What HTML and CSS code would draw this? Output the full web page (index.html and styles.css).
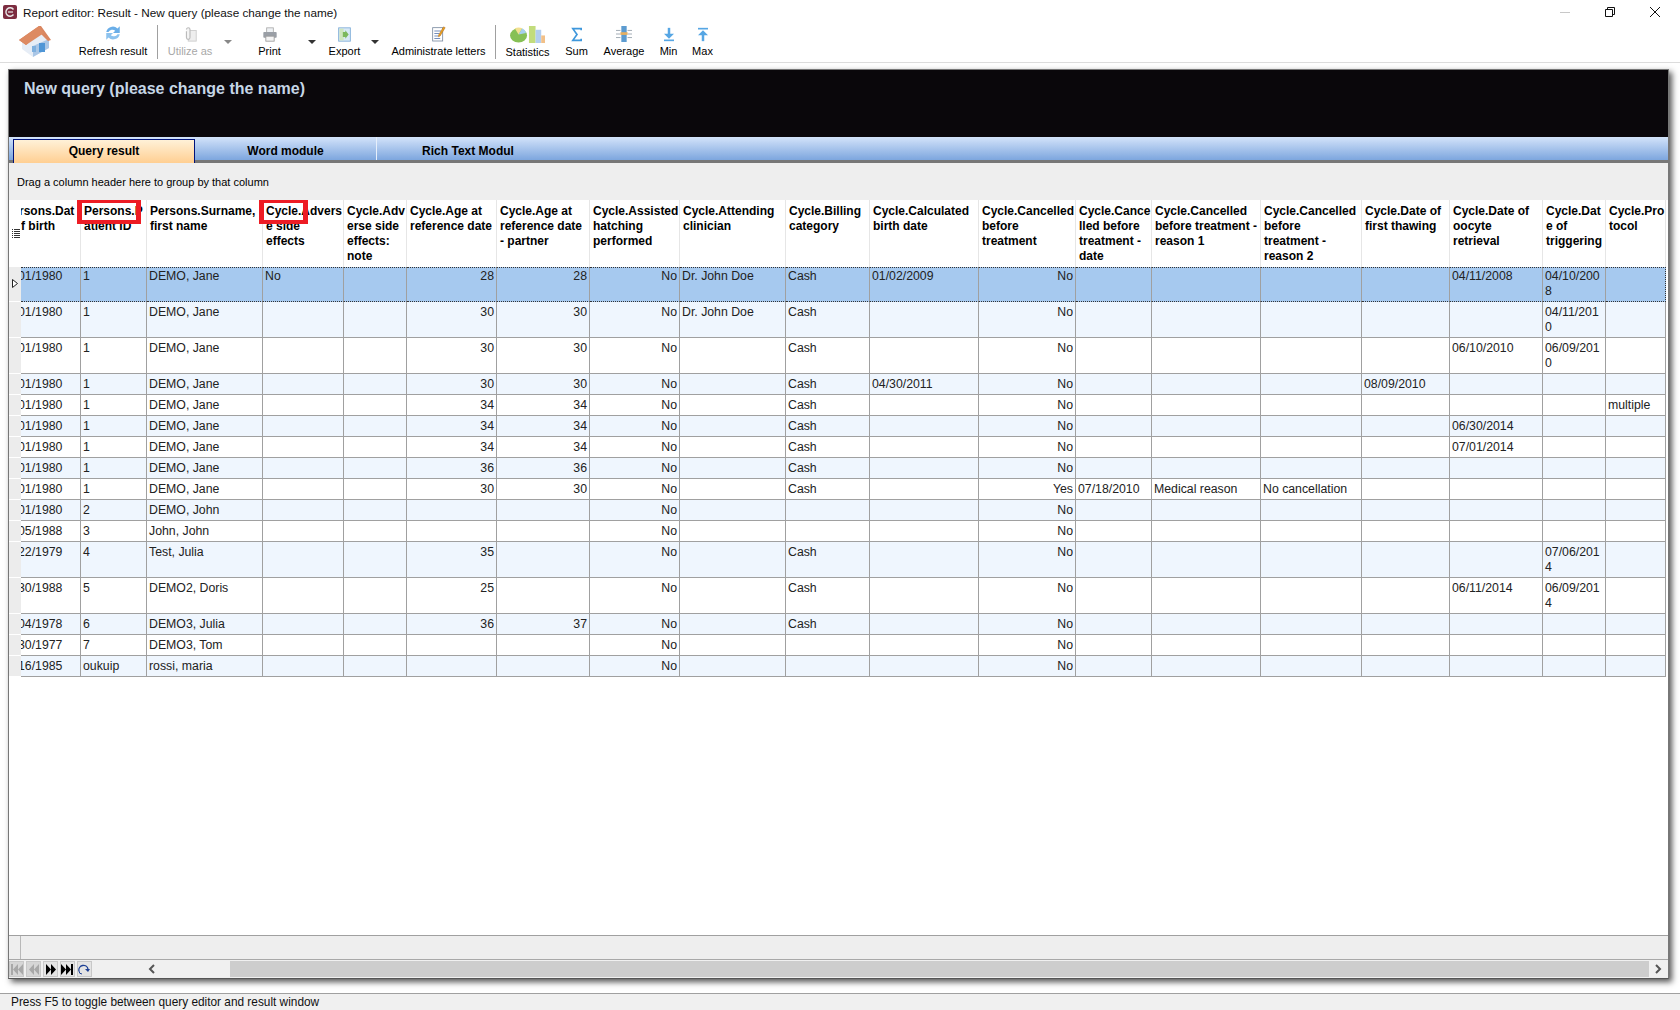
FILE: index.html
```html
<!DOCTYPE html>
<html lang="en">
<head>
    <meta charset="UTF-8">
    <title>Report editor: Result - New query (please change the name)</title>
    <link rel="stylesheet" href="styles.css">
</head>
<body>
    <div class="title-bar">
        <svg class="app-icon" width="16" height="16" viewBox="0 0 16 16"><rect x="1" y="1" width="14" height="14" rx="2" fill="#7c2c40"/><path d="M11.500 5.500a4.200 4.200 0 1 0 0 5" fill="none" stroke="#e8e8e8" stroke-width="1.400"/><path d="M6 8h5" stroke="#e8e8e8" stroke-width="1.200"/></svg>
        <span class="title-text">Report editor: Result - New query (please change the name)</span>
        <div class="win-controls">
            <svg width="10" height="10" viewBox="0 0 10 10"><path d="M0 5.500h10" stroke="#c8c8c8"/></svg>
            <svg width="10" height="10" viewBox="0 0 10 10"><path d="M.5 2.500h7v7h-7zM2.500 2.500v-2h7v7h-2" fill="none" stroke="#111"/></svg>
            <svg width="10" height="10" viewBox="0 0 10 10"><path d="M0 0l10 10M10 0L0 10" stroke="#111"/></svg>
        </div>
    </div>

    <div class="toolbar">
        <svg class="home" width="34" height="33" viewBox="0 0 34 33">
            <path d="M4 15L18 6l13 9v8L15 32 4 24z" fill="#e6edf6"/>
            <path d="M15 21l16-7v9L15 32z" fill="#a9c6e6"/>
            <path d="M1 15L21 1h2l10 14-3 1-9-9-13 13z" fill="#d98660"/>
            <path d="M1 15L21 1l5 7L8 20z" fill="#dd8a62"/>
            <rect x="21" y="18" width="6" height="9" fill="#4f96d6"/>
            <rect x="14" y="21" width="4" height="6" fill="#7fb0de"/>
        </svg>
        <div class="tool tool-refresh">
            <svg width="16" height="18" viewBox="2 1 14 16"><path d="M3 8a6 6 0 0 1 10-3l2-2v6H9l2-2a4 4 0 0 0-6 1z" fill="#6aaee8"/><path d="M15 10a6 6 0 0 1-10 3l-2 2V9h6l-2 2a4 4 0 0 0 6-1z" fill="#8cc2ee"/></svg>
            <span>Refresh result</span>
        </div>
        <div class="tool-sep"></div>
        <div class="tool tool-utilize is-off">
            <svg width="16" height="16" viewBox="0 0 18 18"><rect x="7" y="5" width="9" height="12" fill="#eee" stroke="#ccc"/><path d="M5 4a2 2 0 0 1 4 0v9a2 2 0 0 1-4 0V6" fill="#f4f4f4" stroke="#bbb" stroke-width="1.300"/></svg>
            <span>Utilize as</span>
        </div>
        <div class="caret caret-utilize is-off"></div>
        <div class="tool tool-print">
            <svg width="16" height="15" viewBox="0 0 18 18"><rect x="5" y="1" width="8" height="6" fill="#eef1f4" stroke="#aaa"/><rect x="1" y="6" width="16" height="7" rx="1" fill="#9a9fa6"/><rect x="4" y="11" width="10" height="6" fill="#f4f4f4" stroke="#999"/></svg>
            <span>Print</span>
        </div>
        <div class="caret caret-print"></div>
        <div class="tool tool-export">
            <svg width="15" height="15" viewBox="0 0 18 18"><rect x="2" y="1" width="14" height="16" fill="#d8e8f6" stroke="#7aaad6"/><rect x="3" y="2" width="5" height="14" fill="#cfe6be"/><path d="M7 6h3V4l4 5-4 5v-2H7z" fill="#7cb85c"/></svg>
            <span>Export</span>
        </div>
        <div class="caret caret-export"></div>
        <div class="tool tool-admin">
            <svg width="15" height="17" viewBox="0 0 18 20"><rect x="2" y="3" width="12" height="16" fill="#fff" stroke="#7a8aa0"/><path d="M4 7h8M4 10h6M4 13h5M4 16h7" stroke="#5a7ab0"/><path d="M9 12l6-10 2 1-6 10-2 1z" fill="#e8a020" stroke="#a05a10" stroke-width=".5"/></svg>
            <span>Administrate letters</span>
        </div>
        <div class="tool-sep"></div>
        <div class="tool tool-stats">
            <svg width="36" height="17" viewBox="0 0 38 18"><ellipse cx="9" cy="10" rx="9" ry="7.500" fill="#86c055"/><path d="M9 9L5 2.500a9 7.500 0 0 1 8 0z" fill="#f2e090"/><path d="M9 9l4-6.500a9 7.500 0 0 1 4 5z" fill="#a6cfee"/><rect x="20" y="0" width="7" height="18" fill="#c2dc7c"/><rect x="27" y="4" width="6" height="14" fill="#b2cef0"/><rect x="33" y="10" width="4" height="8" fill="#f2c088"/></svg>
            <span>Statistics</span>
        </div>
        <div class="tool tool-sum">
            <svg width="12" height="15" viewBox="0 0 14 18"><path d="M12 4V2H2l5 7-5 7h10v-2" fill="none" stroke="#3e97dc" stroke-width="2"/></svg>
            <span>Sum</span>
        </div>
        <div class="tool tool-average">
            <svg width="18" height="16" viewBox="0 0 18 18"><path d="M0 5h5M0 9h5M0 13h5M13 5h5M13 9h5M13 13h5" stroke="#9aa4ae"/><rect x="6" y="0" width="6" height="18" fill="#5c9bd0"/><rect x="5" y="7" width="8" height="3" fill="#e8b060"/></svg>
            <span>Average</span>
        </div>
        <div class="tool tool-min">
            <svg width="12" height="15" viewBox="0 0 14 18"><path d="M7 1v10" stroke="#56a6e4" stroke-width="3"/><path d="M1 8h12l-6 6z" fill="#56a6e4"/><path d="M1 16h12" stroke="#56a6e4" stroke-width="2"/></svg>
            <span>Min</span>
        </div>
        <div class="tool tool-max">
            <svg width="12" height="15" viewBox="0 0 14 18"><path d="M7 17V7" stroke="#56a6e4" stroke-width="3"/><path d="M1 10h12L7 4z" fill="#56a6e4"/><path d="M1 2h12" stroke="#56a6e4" stroke-width="2"/></svg>
            <span>Max</span>
        </div>
    </div>

    <div class="main-panel">
        <div class="query-head">New query (please change the name)</div>
        <div class="tabs">
            <div class="tab tab-active">Query result</div>
            <div class="tab tab-split">Word module</div>
            <div class="tab">Rich Text Modul</div>
        </div>
        <div class="group-box">Drag a column header here to group by that column</div>
        <div class="grid-wrap">
            <table class="grid">
                <colgroup>
                    <col class="c0"><col class="c1"><col class="c2"><col class="c3"><col class="c4"><col class="c5"><col class="c6"><col class="c7"><col class="c8"><col class="c9"><col class="c10"><col class="c11"><col class="c12"><col class="c13"><col class="c14"><col class="c15"><col class="c16"><col class="c17"><col class="c18"><col class="c19">
                </colgroup>
                <thead>
                    <tr>
                        <th class="ind ind-head"><svg width="8" height="9" viewBox="0 0 8 9"><path d="M2 .5h6M2 2.500h6M2 4.500h6M2 6.500h6M2 8.500h6M0 .5h1M0 2.500h1M0 4.500h1M0 6.500h1M0 8.500h1" stroke="#333"/></svg></th>
                        <th class="cut">rsons.Dat<br>f birth</th>
                        <th><span class="mark mark-id"></span>Persons.P<br>atient ID</th>
                        <th>Persons.Surname,<br>first name</th>
                        <th><span class="mark mark-adv"></span>Cycle.Advers<br>e side<br>effects</th>
                        <th>Cycle.Adv<br>erse side<br>effects:<br>note</th>
                        <th>Cycle.Age at<br>reference date</th>
                        <th>Cycle.Age at<br>reference date<br>- partner</th>
                        <th>Cycle.Assisted<br>hatching<br>performed</th>
                        <th>Cycle.Attending<br>clinician</th>
                        <th>Cycle.Billing<br>category</th>
                        <th>Cycle.Calculated<br>birth date</th>
                        <th>Cycle.Cancelled<br>before<br>treatment</th>
                        <th>Cycle.Cance<br>lled before<br>treatment -<br>date</th>
                        <th>Cycle.Cancelled<br>before treatment -<br>reason 1</th>
                        <th>Cycle.Cancelled<br>before<br>treatment -<br>reason 2</th>
                        <th>Cycle.Date of<br>first thawing</th>
                        <th>Cycle.Date of<br>oocyte<br>retrieval</th>
                        <th>Cycle.Dat<br>e of<br>triggering</th>
                        <th>Cycle.Pro<br>tocol</th>
                    </tr>
                </thead>
                <tbody>
                    <tr class="sel tall-first"><td class="ind"><svg width="6" height="9" viewBox="0 0 6 9"><path d="M.5.5l5 4-5 4z" fill="#fff" stroke="#222"/></svg></td><td class="cut">01/1980</td><td>1</td><td>DEMO, Jane</td><td>No</td><td></td><td class="n">28</td><td class="n">28</td><td class="n">No</td><td>Dr. John Doe</td><td>Cash</td><td>01/02/2009</td><td class="n">No</td><td></td><td></td><td></td><td></td><td>04/11/2008</td><td>04/10/200<br>8</td><td></td></tr>
                    <tr class="alt tall"><td class="ind"></td><td class="cut">01/1980</td><td>1</td><td>DEMO, Jane</td><td></td><td></td><td class="n">30</td><td class="n">30</td><td class="n">No</td><td>Dr. John Doe</td><td>Cash</td><td></td><td class="n">No</td><td></td><td></td><td></td><td></td><td></td><td>04/11/201<br>0</td><td></td></tr>
                    <tr class="tall"><td class="ind"></td><td class="cut">01/1980</td><td>1</td><td>DEMO, Jane</td><td></td><td></td><td class="n">30</td><td class="n">30</td><td class="n">No</td><td></td><td>Cash</td><td></td><td class="n">No</td><td></td><td></td><td></td><td></td><td>06/10/2010</td><td>06/09/201<br>0</td><td></td></tr>
                    <tr class="alt"><td class="ind"></td><td class="cut">01/1980</td><td>1</td><td>DEMO, Jane</td><td></td><td></td><td class="n">30</td><td class="n">30</td><td class="n">No</td><td></td><td>Cash</td><td>04/30/2011</td><td class="n">No</td><td></td><td></td><td></td><td>08/09/2010</td><td></td><td></td><td></td></tr>
                    <tr><td class="ind"></td><td class="cut">01/1980</td><td>1</td><td>DEMO, Jane</td><td></td><td></td><td class="n">34</td><td class="n">34</td><td class="n">No</td><td></td><td>Cash</td><td></td><td class="n">No</td><td></td><td></td><td></td><td></td><td></td><td></td><td>multiple</td></tr>
                    <tr class="alt"><td class="ind"></td><td class="cut">01/1980</td><td>1</td><td>DEMO, Jane</td><td></td><td></td><td class="n">34</td><td class="n">34</td><td class="n">No</td><td></td><td>Cash</td><td></td><td class="n">No</td><td></td><td></td><td></td><td></td><td>06/30/2014</td><td></td><td></td></tr>
                    <tr><td class="ind"></td><td class="cut">01/1980</td><td>1</td><td>DEMO, Jane</td><td></td><td></td><td class="n">34</td><td class="n">34</td><td class="n">No</td><td></td><td>Cash</td><td></td><td class="n">No</td><td></td><td></td><td></td><td></td><td>07/01/2014</td><td></td><td></td></tr>
                    <tr class="alt"><td class="ind"></td><td class="cut">01/1980</td><td>1</td><td>DEMO, Jane</td><td></td><td></td><td class="n">36</td><td class="n">36</td><td class="n">No</td><td></td><td>Cash</td><td></td><td class="n">No</td><td></td><td></td><td></td><td></td><td></td><td></td><td></td></tr>
                    <tr><td class="ind"></td><td class="cut">01/1980</td><td>1</td><td>DEMO, Jane</td><td></td><td></td><td class="n">30</td><td class="n">30</td><td class="n">No</td><td></td><td>Cash</td><td></td><td class="n">Yes</td><td>07/18/2010</td><td>Medical reason</td><td>No cancellation</td><td></td><td></td><td></td><td></td></tr>
                    <tr class="alt"><td class="ind"></td><td class="cut">01/1980</td><td>2</td><td>DEMO, John</td><td></td><td></td><td></td><td></td><td class="n">No</td><td></td><td></td><td></td><td class="n">No</td><td></td><td></td><td></td><td></td><td></td><td></td><td></td></tr>
                    <tr><td class="ind"></td><td class="cut">05/1988</td><td>3</td><td>John, John</td><td></td><td></td><td></td><td></td><td class="n">No</td><td></td><td></td><td></td><td class="n">No</td><td></td><td></td><td></td><td></td><td></td><td></td><td></td></tr>
                    <tr class="alt tall"><td class="ind"></td><td class="cut">22/1979</td><td>4</td><td>Test, Julia</td><td></td><td></td><td class="n">35</td><td></td><td class="n">No</td><td></td><td>Cash</td><td></td><td class="n">No</td><td></td><td></td><td></td><td></td><td></td><td>07/06/201<br>4</td><td></td></tr>
                    <tr class="tall"><td class="ind"></td><td class="cut">30/1988</td><td>5</td><td>DEMO2, Doris</td><td></td><td></td><td class="n">25</td><td></td><td class="n">No</td><td></td><td>Cash</td><td></td><td class="n">No</td><td></td><td></td><td></td><td></td><td>06/11/2014</td><td>06/09/201<br>4</td><td></td></tr>
                    <tr class="alt"><td class="ind"></td><td class="cut">04/1978</td><td>6</td><td>DEMO3, Julia</td><td></td><td></td><td class="n">36</td><td class="n">37</td><td class="n">No</td><td></td><td>Cash</td><td></td><td class="n">No</td><td></td><td></td><td></td><td></td><td></td><td></td><td></td></tr>
                    <tr><td class="ind"></td><td class="cut">30/1977</td><td>7</td><td>DEMO3, Tom</td><td></td><td></td><td></td><td></td><td class="n">No</td><td></td><td></td><td></td><td class="n">No</td><td></td><td></td><td></td><td></td><td></td><td></td><td></td></tr>
                    <tr class="alt"><td class="ind"></td><td class="cut">16/1985</td><td>oukuip</td><td>rossi, maria</td><td></td><td></td><td></td><td></td><td class="n">No</td><td></td><td></td><td></td><td class="n">No</td><td></td><td></td><td></td><td></td><td></td><td></td><td></td></tr>
                </tbody>
            </table>
        </div>
        <div class="grid-footer"><div class="footer-ind"></div></div>
        <div class="nav-row">
            <div class="nav-btn is-off"><svg width="13" height="11" viewBox="0 0 13 11"><path d="M1 0h2v11H1zM8 0v11L3 5.500zM13 0v11L8 5.500z" fill="#a8a8a8"/></svg></div>
            <div class="nav-btn is-off"><svg width="12" height="11" viewBox="0 0 12 11"><path d="M6 0v11L1 5.500zM11 0v11L6 5.500z" fill="#a8a8a8"/></svg></div>
            <div class="nav-btn"><svg width="12" height="11" viewBox="0 0 12 11"><path d="M1 0v11l5-5.500zM6 0v11l5-5.500z" fill="#000"/></svg></div>
            <div class="nav-btn"><svg width="13" height="11" viewBox="0 0 13 11"><path d="M0 0v11l5-5.500zM5 0v11l5-5.500zM10 0h2v11h-2z" fill="#000"/></svg></div>
            <div class="nav-btn"><svg width="13" height="11" viewBox="0 0 13 11"><path d="M1 7a4.500 4.500 0 0 1 9-2" fill="none" stroke="#1c3f94" stroke-width="1.300"/><path d="M7 5h5l-2 3z" fill="#1c3f94"/><path d="M1 7a3 3 0 0 0 3 3" fill="none" stroke="#1c3f94"/></svg></div>
            <div class="scroll">
                <svg class="scroll-arrow" width="8" height="10" viewBox="0 0 8 10"><path d="M6 1L2 5l4 4" fill="none" stroke="#555" stroke-width="2"/></svg>
                <div class="scroll-thumb"></div>
                <svg class="scroll-arrow" width="8" height="10" viewBox="0 0 8 10"><path d="M2 1l4 4-4 4" fill="none" stroke="#555" stroke-width="2"/></svg>
            </div>
        </div>
    </div>

    <div class="status-bar">Press F5 to toggle between query editor and result window</div>
</body>
</html>
```
FILE: styles.css
```css
html, body {
    margin: 0;
    height: 100%;
}

body {
    display: flex;
    flex-direction: column;
    height: 1010px;
    overflow: hidden;
    background-color: #fff;
    color: #000;
    font-family: "Liberation Sans", Arial, sans-serif;
    font-size: 12px;
}

/* title bar */
.title-bar {
    display: flex;
    align-items: center;
    height: 24px;
    padding-left: 2px;
    flex-shrink: 0;
}

.title-text {
    margin-left: 5px;
    color: #111;
    font-size: 11.75px;
}

.win-controls {
    display: flex;
    gap: 35px;
    margin-left: auto;
    margin-right: 20px;
}

/* toolbar */
.toolbar {
    display: flex;
    height: 38px;
    flex-shrink: 0;
    border-bottom: 1px solid #dcdcdc;
    box-sizing: content-box;
    font-size: 11px;
}

.home {
    margin: 1px 0 0 18px;
}

.tool {
    display: flex;
    flex-direction: column;
    align-items: center;
    justify-content: flex-end;
    padding-bottom: 4px;
    white-space: nowrap;
}

.tool span {
    line-height: 14px;
}

.tool svg {
    margin-bottom: 2px;
}

.is-off {
    color: #a8a8a8;
}

.tool-sep {
    width: 1px;
    height: 34px;
    margin-top: 1px;
    background-color: #a0a0a0;
}

.caret {
    width: 0;
    height: 0;
    margin-top: 16px;
    border-left: 4px solid transparent;
    border-right: 4px solid transparent;
    border-top: 4px solid #333;
}

.caret.is-off {
    border-top-color: #888;
}

.tool-refresh { width: 70px; margin: 0 9px 0 26px; }
.tool-utilize { width: 42px; margin-left: 11px; }
.caret-utilize { margin-left: 13px; }
.tool-print { width: 21px; margin-left: 27px; }
.caret-print { margin-left: 28px; }
.tool-export { width: 31px; margin-left: 13px; }
.caret-export { margin-left: 11px; }
.tool-admin { width: 93px; margin: 0 10px 0 13px; }
.tool-stats { width: 43px; margin-left: 10px; padding-bottom: 3px; }
.tool-sum { width: 21px; margin-left: 17px; }
.tool-average { width: 42px; margin-left: 16px; }
.tool-min { width: 15px; margin-left: 16px; }
.tool-max { width: 19px; margin-left: 17px; }

/* main panel */
.main-panel {
    display: flex;
    flex-direction: column;
    height: 908px;
    margin: 6px 11px 0 8px;
    flex-shrink: 0;
    border: 1px solid #777;
    border-bottom-color: #555;
    background-color: #fff;
    box-shadow: 3px 3px 6px #555;
}

.query-head {
    height: 67px;
    padding: 9px 0 0 15px;
    box-sizing: border-box;
    background-color: #0a070b;
    color: #c6d6e6;
    font-size: 16px;
    font-weight: bold;
    line-height: 20px;
}

.tabs {
    display: flex;
    height: 26px;
    padding-left: 4px;
    box-sizing: border-box;
    background: linear-gradient(#d3e3fa, #7da6de 23px);
    border-bottom: 3px solid #777;
    border-image: linear-gradient(#00127a 45%, #f2b760 45%, #f2b760 70%, #777 70%) 3;
    font-weight: bold;
}

.tab {
    width: 182px;
    height: 23px;
    box-sizing: border-box;
    padding-top: 6px;
    text-align: center;
    line-height: 17px;
}

.tab-split {
    border-right: 1px solid #e6effb;
}

.tab-active {
    height: 24px;
    margin-top: 2px;
    padding-top: 3px;
    border: 1px solid #00127a;
    border-bottom: none;
    background: linear-gradient(#fff1d8, #ffcf92);
}

.group-box {
    height: 37px;
    padding: 12px 0 0 8px;
    box-sizing: border-box;
    background-color: #eee;
    font-size: 11px;
    line-height: 15px;
}

/* result grid */
.grid-wrap {
    flex: 1;
    overflow: hidden;
}

.grid {
    table-layout: fixed;
    width: 1657px;
    border-collapse: separate;
    border-spacing: 0;
}

.c0 { width: 12px; }
.c1 { width: 60px; }
.c2 { width: 66px; }
.c3 { width: 116px; }
.c4 { width: 81px; }
.c5 { width: 63px; }
.c6 { width: 90px; }
.c7 { width: 93px; }
.c8 { width: 90px; }
.c9 { width: 106px; }
.c10 { width: 84px; }
.c11 { width: 109px; }
.c12 { width: 97px; }
.c13 { width: 76px; }
.c14 { width: 109px; }
.c15 { width: 101px; }
.c16 { width: 88px; }
.c17 { width: 93px; }
.c18 { width: 63px; }
.c19 { width: 60px; }

th {
    position: relative;
    height: 67px;
    padding: 4px 0 0 3px;
    box-sizing: border-box;
    vertical-align: top;
    text-align: left;
    white-space: nowrap;
    overflow: hidden;
    border-right: 1px solid #e6e6e6;
    font-weight: bold;
    line-height: 15px;
}

th:has(.mark) {
    overflow: visible;
}

td {
    height: 21px;
    padding: 3px 2px 0 2px;
    box-sizing: border-box;
    vertical-align: top;
    white-space: nowrap;
    overflow: hidden;
    border-right: 1px solid #a0a0a0;
    border-bottom: 1px solid #a0a0a0;
    color: #222;
    font-size: 12.3px;
    line-height: 15px;
}

td.n {
    text-align: right;
}

.cut {
    padding-left: 0;
    text-indent: -3px;
}

th.cut {
    text-indent: -2px;
}

tr.tall td {
    height: 36px;
}

tr.tall-first td {
    height: 35px;
}

tr.alt td {
    background-color: #eff6fe;
}

tr.sel td {
    padding-top: 1px;
    background-color: #a6c9ef;
    border-top: 1px dotted #333;
    border-bottom: 1px dotted #333;
}

tr.sel td:last-child {
    border-right: 1px dotted #333;
}

th.ind,
td.ind,
tr.alt td.ind,
tr.sel td.ind {
    padding: 0 0 0 3px;
    background-color: #ececec;
    border-top: none;
    border-right: none;
    border-bottom: 1px solid #fff;
    text-indent: 0;
}

th.ind {
    background-color: #fff;
    padding-top: 27px;
    border-bottom: none;
}

td.ind svg {
    margin-top: 12px;
}

/* the red marks drawn onto the screenshot */
.mark {
    position: absolute;
    top: -2px;
    height: 26px;
    box-sizing: border-box;
    border: 5px solid #ed1c24;
    border-bottom-width: 4px;
}

.mark-id {
    left: -4px;
    width: 64px;
}

.mark-adv {
    left: -4px;
    width: 49px;
}

/* bottom of the grid */
.grid-footer {
    height: 25px;
    border-top: 1px solid #a0a0a0;
    border-bottom: 1px solid #a8a8a8;
    box-sizing: border-box;
    background-color: #eee;
}

.footer-ind {
    width: 11px;
    height: 100%;
    border-right: 1px solid #b8b8b8;
}

.nav-row {
    display: flex;
    align-items: center;
    height: 18px;
    background-color: #f0f0f0;
}

.nav-btn {
    display: flex;
    align-items: center;
    justify-content: center;
    width: 15px;
    height: 16px;
    margin-right: 2px;
    background-color: #e4e4e4;
    outline: 1px solid #c8c8c8;
    outline-offset: -1px;
}

.nav-btn.is-off {
    background-color: #d6d6d6;
}

.scroll {
    display: flex;
    align-items: center;
    flex: 1;
    height: 16px;
    padding-left: 54px;
}

.scroll-thumb {
    flex: 1;
    height: 16px;
    margin: 0 5px 0 68px;
    background-color: #cdcdcd;
}

.scroll-arrow {
    flex-shrink: 0;
    margin-right: 6px;
}

/* status bar */
.status-bar {
    height: 17px;
    margin-top: 14px;
    padding-left: 11px;
    flex-shrink: 0;
    border-top: 1px solid #a0a0a0;
    background-color: #f0f0f0;
    color: #111;
    font-size: 11.85px;
    line-height: 17px;
}
```
